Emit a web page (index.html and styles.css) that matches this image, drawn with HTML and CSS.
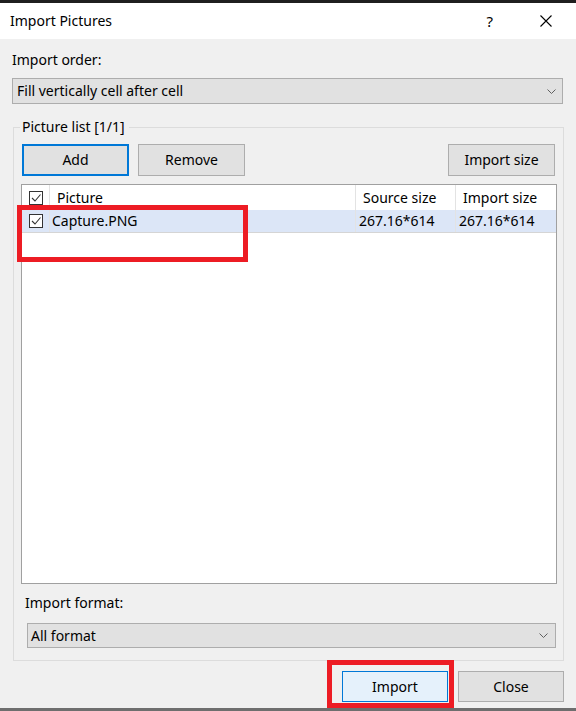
FILE: index.html
```html
<!DOCTYPE html>
<html lang="en">
<head>
<meta charset="utf-8">
<title>Import Pictures</title>
<link rel="stylesheet" href="styles.css">
</head>
<body>
<div class="window">
  <div class="topstrip"></div>
  <div class="titlebar">
    <span class="title">Import Pictures</span>
    <span class="help">?</span>
    <span class="close"><svg width="12" height="12" viewBox="0 0 12 12"><path d="M0.5 0.5 L11.5 11.5 M11.5 0.5 L0.5 11.5" stroke="#000" stroke-width="1.1" fill="none"/></svg></span>
  </div>
  <div class="content">
    <div class="label order-label">Import order:</div>
    <div class="combo combo-order">
      <span>Fill vertically cell after cell</span>
      <svg class="chev" width="9" height="5" viewBox="0 0 9 5"><path d="M0.5 0.5 L4.5 4.5 L8.5 0.5" stroke="#606060" stroke-width="1" fill="none"/></svg>
    </div>
    <fieldset class="group">
      <legend>Picture list [1/1]</legend>
      <div class="toolbar">
        <button class="btn btn-default">Add</button>
        <button class="btn">Remove</button>
        <span class="spacer"></span>
        <button class="btn">Import size</button>
      </div>
      <div class="list">
        <div class="lrow lhead">
          <div class="cell c-check"><span class="cb"><svg width="12" height="12" viewBox="0 0 12 12"><path d="M2 6 L5 9 L10.5 2.5" stroke="#333" stroke-width="1.1" fill="none"/></svg></span></div>
          <div class="cell c-name hd">Picture</div>
          <div class="cell c-src hd">Source size</div>
          <div class="cell c-imp hd">Import size</div>
        </div>
        <div class="lrow selected">
          <div class="cell c-check"><span class="cb"><svg width="12" height="12" viewBox="0 0 12 12"><path d="M2 6 L5 9 L10.5 2.5" stroke="#333" stroke-width="1.1" fill="none"/></svg></span></div>
          <div class="cell c-name">Capture.PNG</div>
          <div class="cell c-src">267.16*614</div>
          <div class="cell c-imp">267.16*614</div>
        </div>
      </div>
      <div class="label fmt-label">Import format:</div>
      <div class="combo combo-fmt">
        <span>All format</span>
        <svg class="chev" width="9" height="5" viewBox="0 0 9 5"><path d="M0.5 0.5 L4.5 4.5 L8.5 0.5" stroke="#606060" stroke-width="1" fill="none"/></svg>
      </div>
    </fieldset>
    <div class="footer">
      <button class="btn btn-primary">Import</button>
      <button class="btn">Close</button>
    </div>
  </div>
  <div class="mark mark1"></div>
  <div class="mark mark2"></div>
</div>
</body>
</html>
```

FILE: styles.css
```css
* { box-sizing: border-box; }
html, body { margin: 0; padding: 0; }
body {
  width: 576px;
  height: 711px;
  overflow: hidden;
  background: #f0f0f0;
  font-family: "Segoe UI", "Noto Sans", "Open Sans", sans-serif;
  font-size: 14px;
  line-height: 20px;
  color: #000;
}
.window {
  position: relative;
  height: 711px;
  display: flex;
  flex-direction: column;
  border-bottom: 3px solid #6e6e6e;
}
.topstrip { height: 3px; background: #1f1f1f; flex: none; }
.titlebar {
  height: 36px;
  flex: none;
  background: #fff;
  display: flex;
  align-items: center;
}
.title { padding-left: 10px; font-size: 14px; color: #000; }
.help { margin-left: auto; font-size: 15px; margin-right: 47px; }
.close { width: 12px; height: 12px; margin-right: 24px; display: flex; }
.close svg { display: block; }

.content {
  flex: 1;
  display: flex;
  flex-direction: column;
  padding: 0 13px 0 12px;
}
.label { height: 20px; }
.order-label { margin-top: 11px; }
.combo {
  display: flex;
  align-items: center;
  justify-content: space-between;
  background: #e1e1e1;
  border: 1px solid #adadad;
}
.combo-order { margin-top: 8px; height: 26px; padding: 0 6px 0 4px; }
.chev { display: block; }

.group {
  margin: 13px -1px 0 1px;
  padding: 7px 8px 12px 8px;
  border: 1px solid #dcdcdc;
  min-width: 0;
}
.group legend {
  margin-left: -2px;
  padding: 0 4px 0 2px;
  line-height: 20px;
}
.toolbar { display: flex; gap: 9px; }
.spacer { flex: 1; }
.btn {
  font: inherit;
  color: #000;
  height: 32px;
  width: 107px;
  padding: 0;
  background: #e1e1e1;
  border: 1px solid #adadad;
  border-radius: 0;
}
.btn-default { border: 2px solid #0078d7; }
.btn-primary { background: #e5f1fb; border: 1px solid #0078d7; }

.list {
  margin: 8px -2px 0 -1px;
  height: 400px;
  background: #fff;
  border: 1px solid #a0a0a0;
}
.lrow { display: flex; }
.lhead { height: 25px; }
.selected { height: 23px; background: #dce6f7; border-bottom: 1px solid #d5d5d5; }
.cell {
  display: flex;
  align-items: center;
  white-space: nowrap;
  border-right: 1px solid #e3e3e3;
}
.c-check { width: 28px; justify-content: center; padding-left: 0; }
.c-name { width: 306px; padding-left: 2px; }
.c-src { width: 100px; padding-left: 3px; }
.c-imp { flex: 1; padding-left: 3px; border-right: none; }
.hd { padding-left: 7px; }
.cb {
  width: 14px;
  height: 14px;
  border: 1px solid #333;
  background: #fff;
  display: flex;
  align-items: center;
  justify-content: center;
}
.cb svg { display: block; }

.fmt-label { margin: 9px 0 0 3px; }
.combo-fmt { margin: 10px -1px 0 5px; height: 25px; padding: 0 7px 0 3px; }

.footer {
  display: flex;
  justify-content: flex-end;
  gap: 10px;
  margin-top: 10px;
  margin-right: -1px;
}
.footer .btn { width: 106px; height: 31px; }

.mark {
  position: absolute;
  border: 5px solid #ed1c24;
}
.mark1 { left: 17px; top: 205px; width: 231px; height: 57px; }
.mark2 { left: 327px; top: 660px; width: 127px; height: 48px; }
```
